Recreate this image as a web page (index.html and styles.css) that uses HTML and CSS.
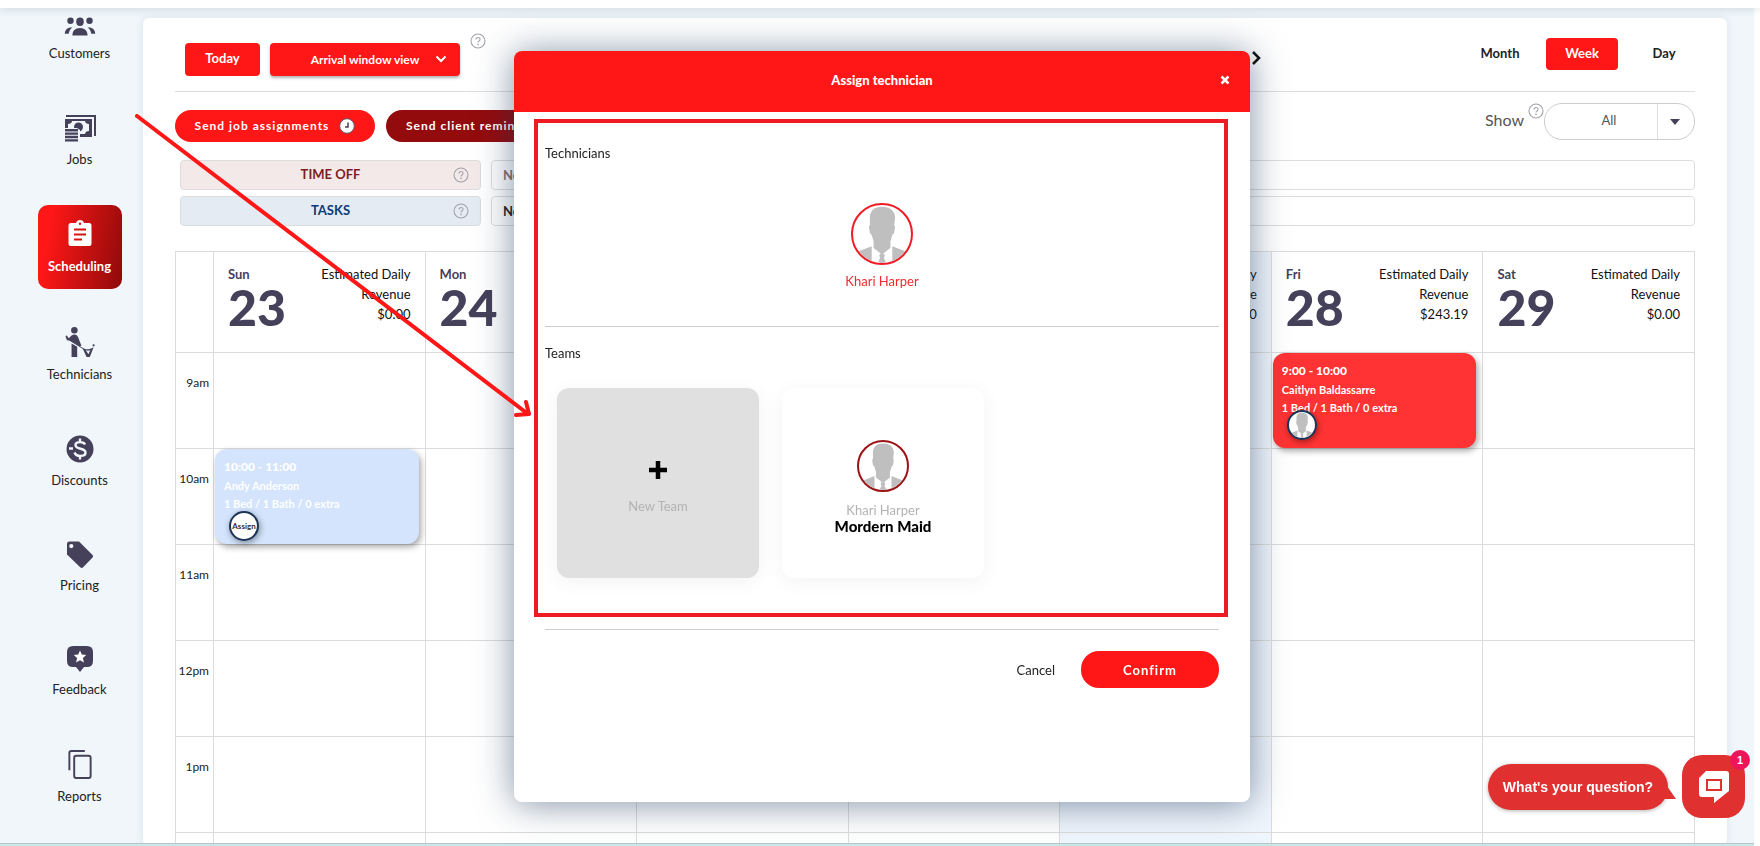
FILE: index.html
```html
<!DOCTYPE html>
<html lang="en">
<head>
    <meta charset="UTF-8">
    <meta name="viewport" content="width=device-width, initial-scale=1.0">
    <title>Scheduling</title>
    <link rel="stylesheet" href="styles.css">
</head>
<body>

    <!-- shared icons -->
    <svg class="defs" width="0" height="0">
        <symbol id="person" viewBox="0 0 62 62">
            <path fill="#bfbfbf" d="M18 14C18 6 23 2 31 2s14 4 14 12l-1 8 1 1-1 7-2 2-2 7v7l-9 7-9-7v-7l-2-7-2-2-1-7 1-1z"/>
            <path fill="#bfbfbf" d="M2 51l18-7v18H2zM60 51l-18-7v18h18zM29 52h4l1 2-1 3 2 3-2 2h-4l-2-2 2-3-1-3z"/>
        </symbol>
        <symbol id="help" viewBox="0 0 16 16">
            <circle cx="8" cy="8" r="7" fill="none" stroke="#a3a3ab" stroke-width="1.1"/>
            <path d="M6 6.5C6 3.8 10 3.8 10 6.4 10 8 8 7.9 8 9.5" fill="none" stroke="#a3a3ab" stroke-width="1.1"/>
            <circle cx="8" cy="11.4" r=".8" fill="#a3a3ab"/>
        </symbol>
    </svg>

    <header class="topbar"></header>

    <div class="page">
        <nav class="sidebar">
            <a href="#" class="nav-item">
                <svg width="32" height="19" viewBox="0 1 32 20"><circle cx="6" cy="5" r="3.4"/><ellipse cx="16" cy="6" rx="4" ry="4.4"/><circle cx="26" cy="5" r="3.4"/><path d="M8 20.500c0-5 3-8 8-8s8 3 8 8zM0 18.500c0-4 3-7 8-6.500-2 1.500-3 3-4 6.500zM32 18.500c0-4-3-7-8-6.500 2 1.500 3 3 4 6.500z"/></svg>
                <span>Customers</span>
            </a>
            <a href="#" class="nav-item">
                <svg width="32" height="28" viewBox="0 0 32 28"><path d="M2 1h30v21h-2V3H2zM1 5h27v18H1z"/><path fill="#f0f6fa" d="M8 7h13c0 2 2 3 4 3v7c-2 0-4 1-4 3H8c0-2-2-3-4-3v-7c2 0 4-1 4-3z"/><circle cx="14.500" cy="13" r="4.500"/><path fill="#f0f6fa" d="M0 14h13l3 2v12H0z"/><path d="M1 15h13v2.400H1zM1 18.400h13v2.400H1zM1 21.800h13v2.400H1zM1 25.200h13v2.400H1z"/></svg>
                <span>Jobs</span>
            </a>
            <a href="#" class="nav-item active">
                <svg width="24" height="26" viewBox="0 0 24 26"><path fill="#fff" fill-rule="evenodd" d="M3 3h5c1-4 7-4 8 0h5q2.500 0 2.500 2.500v18Q23.500 26 21 26H3Q.5 26 .5 23.500v-18Q.5 3 3 3zm9-.500a1.200 1.200 0 100 2.400 1.200 1.200 0 000-2.400zM6 8.500v2h12v-2zm0 5v2h12v-2zm0 5v2h8v-2z"/></svg>
                <span>Scheduling</span>
            </a>
            <a href="#" class="nav-item">
                <svg width="32" height="30" viewBox="0 0 32 32"><circle cx="10" cy="3.500" r="3.500"/><path d="M.500 9.500l1.500-.500 2 3 3-3c3-2 6-1 7 2l3.500 9-2 .500L5 14.500l-3-.500z"/><path d="M7 17.500l6 3.500v11H7z"/><path d="M4 13.500L20 23.500" stroke="#46415a"/><path d="M18.500 22c5 3 7 2 12-.500L26.500 32H23z"/><path d="M22 24.500c2 1 3 1 5 0L25 29z" fill="#f0f6fa"/><circle cx="30.500" cy="19.500" r="1.200"/></svg>
                <span>Technicians</span>
            </a>
            <a href="#" class="nav-item">
                <svg width="28" height="28" viewBox="0 0 28 28"><circle cx="14" cy="14" r="13.500"/><path d="M19 9.500c-1-3-9.500-3.500-9.500.500 0 5 10 2.500 10 7.500 0 4.500-9.500 4.500-11 0M14 3.500v4M14 20.500v4M3 13.500h4" fill="none" stroke="#f0f6fa" stroke-width="2.400"/></svg>
                <span>Discounts</span>
            </a>
            <a href="#" class="nav-item">
                <svg width="28" height="27" viewBox="0 0 28 28"><path fill-rule="evenodd" d="M3 .500h10L27 14.500q1 1.500 0 2.500L17 27.500q-1 1-2.500 0L.500 14V3Q.500.500 3 .500zM5 3a2.200 2.200 0 100 4.400A2.200 2.200 0 005 3z"/></svg>
                <span>Pricing</span>
            </a>
            <a href="#" class="nav-item">
                <svg width="28" height="26" viewBox="0 0 28 26"><path d="M7 0h14q6 0 6 6v9q0 6-6 6h-3l-4 5-4-5H7q-6 0-6-6V6q0-6 6-6z"/><path fill="#fff" d="M14 4.500l1.800 4 4.400.500-3.300 3 1 4.400-3.900-2.200-3.900 2.200 1-4.400-3.300-3 4.400-.500z"/></svg>
                <span>Feedback</span>
            </a>
            <a href="#" class="nav-item">
                <svg width="24" height="29" viewBox="0 0 24 30"><path fill="none" stroke="#46415a" stroke-width="2" d="M1 21V3q0-2 2-2h14M8 6h13q2 0 2 2v19q0 2-2 2H8q-2 0-2-2V8q0-2 2-2z"/></svg>
                <span>Reports</span>
            </a>
        </nav>

        <main class="panel">
            <div class="toolbar">
                <div class="toolbar-left">
                    <button type="button" class="btn">Today</button>
                    <div class="view-select">
                        <select aria-label="Calendar view"><option>Arrival window view</option></select>
                        <svg width="12" height="8" viewBox="0 0 12 8"><path d="M1.500 1.500L6 6l4.500-4.500" fill="none" stroke="#fff" stroke-width="2"/></svg>
                    </div>
                    <svg class="help-top" width="16" height="16"><use href="#help"/></svg>
                </div>
                <button type="button" class="next" aria-label="Next week">
                    <svg width="10" height="14" viewBox="0 0 10 14"><path d="M2 1l6 6-6 6" fill="none" stroke="#111" stroke-width="2.500"/></svg>
                </button>
                <div class="ranges">
                    <button type="button" class="range">Month</button>
                    <button type="button" class="range selected">Week</button>
                    <button type="button" class="range">Day</button>
                </div>
            </div>

            <div class="actions">
                <button type="button" class="pill">Send job assignments
                    <svg width="16" height="16" viewBox="0 0 16 16"><circle cx="8" cy="8" r="7.300" fill="#fff" stroke="#5a5566"/><path d="M9 4.500V9H6" fill="none" stroke="#46415a" stroke-width="1.500"/></svg>
                </button>
                <button type="button" class="pill dark">Send client reminders</button>
                <div class="show">
                    <label for="show">Show</label>
                    <svg class="help-show" width="16" height="16"><use href="#help"/></svg>
                    <div class="show-select">
                        <select id="show"><option>All</option></select>
                        <span class="caret"></span>
                    </div>
                </div>
            </div>

            <div class="notes">
                <div class="note-title off"><span>TIME OFF</span><svg width="16" height="16"><use href="#help"/></svg></div>
                <div class="note off">No time off</div>
                <div class="note-title tasks"><span>TASKS</span><svg width="16" height="16"><use href="#help"/></svg></div>
                <div class="note tasks">No tasks</div>
            </div>

            <table class="calendar">
                <thead>
                    <tr>
                        <th class="hour"></th>
                        <th><div class="day"><div>Sun<b>23</b></div><p>Estimated Daily Revenue<br>$0.00</p></div></th>
                        <th><div class="day"><div>Mon<b>24</b></div><p>Estimated Daily Revenue<br>$0.00</p></div></th>
                        <th><div class="day"><div>Tue<b>25</b></div><p>Estimated Daily Revenue<br>$0.00</p></div></th>
                        <th><div class="day"><div>Wed<b>26</b></div><p>Estimated Daily Revenue<br>$0.00</p></div></th>
                        <th class="today"><div class="day"><div>Thu<b>27</b></div><p>Estimated Daily Revenue<br>$0.00</p></div></th>
                        <th><div class="day"><div>Fri<b>28</b></div><p>Estimated Daily Revenue<br>$243.19</p></div></th>
                        <th><div class="day"><div>Sat<b>29</b></div><p>Estimated Daily Revenue<br>$0.00</p></div></th>
                    </tr>
                </thead>
                <tbody>
                    <tr><td class="hour">9am</td><td></td><td></td><td></td><td></td><td class="today"></td>
                        <td>
                            <div class="event booked">
                                <strong>9:00 - 10:00</strong>
                                <span>Caitlyn Baldassarre</span>
                                <span>1 Bed / 1 Bath / 0 extra</span>
                                <div class="assignee"><svg width="26" height="26"><use href="#person"/></svg></div>
                            </div>
                        </td><td></td></tr>
                    <tr><td class="hour">10am</td>
                        <td>
                            <div class="event open">
                                <strong>10:00 - 11:00</strong>
                                <span>Andy Anderson</span>
                                <span>1 Bed / 1 Bath / 0 extra</span>
                                <button type="button" class="assignee">Assign</button>
                            </div>
                        </td><td></td><td></td><td></td><td class="today"></td><td></td><td></td></tr>
                    <tr><td class="hour">11am</td><td></td><td></td><td></td><td></td><td class="today"></td><td></td><td></td></tr>
                    <tr><td class="hour">12pm</td><td></td><td></td><td></td><td></td><td class="today"></td><td></td><td></td></tr>
                    <tr><td class="hour">1pm</td><td></td><td></td><td></td><td></td><td class="today"></td><td></td><td></td></tr>
                    <tr><td class="hour"></td><td></td><td></td><td></td><td></td><td class="today"></td><td></td><td></td></tr>
                </tbody>
            </table>
        </main>
    </div>

    <div class="overlay">
        <div class="modal" role="dialog" aria-labelledby="modal-title">
            <div class="modal-header">
                <h2 id="modal-title">Assign technician</h2>
                <button type="button" class="close" aria-label="Close"><svg width="10" height="10" viewBox="0 0 10 10"><path d="M1.500 1.500l7 7M8.500 1.500l-7 7" stroke="#fff" stroke-width="2.500"/></svg></button>
            </div>
            <div class="choices">
                <h3>Technicians</h3>
                <button type="button" class="tech">
                    <span class="avatar"><svg><use href="#person"/></svg></span>
                    Khari Harper
                </button>
                <hr>
                <h3>Teams</h3>
                <div class="teams">
                    <button type="button" class="team new">
                        <svg width="20" height="20" viewBox="0 0 20 20"><path d="M10 1v18M1 10h18" stroke="#000" stroke-width="4.500"/></svg>
                        <span>New Team</span>
                    </button>
                    <button type="button" class="team">
                        <span class="avatar small"><svg><use href="#person"/></svg></span>
                        <span>Khari Harper</span>
                        <strong>Mordern Maid</strong>
                    </button>
                </div>
            </div>
            <div class="modal-footer">
                <button type="button" class="cancel">Cancel</button>
                <button type="button" class="confirm">Confirm</button>
            </div>
        </div>
    </div>

    <!-- pointer from the menu to the dialog -->
    <svg class="arrow" width="400" height="310" viewBox="0 0 400 310"><path d="M2 2l391 298M391 288l3 12-13 1" fill="none" stroke="#ff1717" stroke-width="4" stroke-linecap="round" stroke-linejoin="round"/></svg>

    <div class="chat">
        <div class="chat-text">What's your question?</div>
        <button type="button" class="chat-button" aria-label="Open chat">
            <svg width="32" height="34" viewBox="0 0 32 34"><path fill="#fff" fill-rule="evenodd" d="M8 1h20q3 0 3 3v17L16 33v-6H4q-3 0-3-3V8zM8 9v12h16V9zm2 2h12v8H10z"/></svg>
            <span class="badge">1</span>
        </button>
    </div>

    <footer class="bottom-bar"></footer>

</body>
</html>
```
FILE: styles.css
```css
* {
    box-sizing: border-box;
}
body {
    font-family: Lato, sans-serif;
    font-size: 13px;
    line-height: 20px;
    color: #222;
    margin: 0;
    height: 100vh;
    overflow: hidden;
    background-color: #fff;
}
button, select {
    font: inherit;
    color: inherit;
    border: 0;
    background: none;
    padding: 0;
    cursor: pointer;
}
svg {
    display: block;
    flex: none;
}
.defs {
    position: absolute;
}
.topbar {
    position: fixed;
    top: 0;
    left: 0;
    right: 0;
    height: 8px;
    background-color: #fff;
    box-shadow: 0 1px 8px rgba(60, 100, 110, 0.2);
    z-index: 1;
}
.bottom-bar {
    position: fixed;
    bottom: 0;
    left: 0;
    right: 6px;
    height: 3px;
    border-top: 1px solid #b5c6ca;
    background-color: #cbe8e9;
}
.page {
    display: grid;
    grid-template-columns: 143px 1fr;
    height: 100vh;
    margin-right: 6px;
    background-color: #f0f6fa;
}

/* Sidebar */
.sidebar {
    display: flex;
    flex-direction: column;
    align-items: center;
    gap: 23px;
    padding: 2px 0 0 16px;
}
.nav-item {
    display: flex;
    flex-direction: column;
    align-items: center;
    gap: 7px;
    width: 84px;
    padding: 15px 0 13px;
    border-radius: 10px;
    color: #222;
    fill: #46415a;
    text-decoration: none;
}
.nav-item.active {
    gap: 10px;
    background: linear-gradient(100deg, #ff1717 15%, #8f0a0a);
    color: #fff;
    font-weight: bold;
}

/* Calendar panel */
.panel {
    margin: 18px 27px 0 0;
    padding: 0 32px;
    background-color: #fff;
    border-radius: 6px;
    box-shadow: 0 0 8px rgba(40, 80, 100, 0.1);
    overflow: hidden;
}
.toolbar {
    display: flex;
    height: 74px;
    padding: 20px 10px 0;
    border-bottom: 1px solid #ddd;
}
.toolbar-left {
    display: flex;
    gap: 10px;
}
.btn {
    width: 75px;
    height: 33px;
    margin-top: 5px;
    padding-bottom: 3px;
    border-radius: 4px;
    background-color: #ff1717;
    color: #fff;
    font-weight: bold;
}
.view-select {
    position: relative;
    width: 190px;
    height: 33px;
    margin-top: 5px;
    border-radius: 4px;
    background-color: #ff1717;
    box-shadow: 0 2px 3px rgba(0, 0, 0, 0.3);
}
.view-select select {
    appearance: none;
    width: 100%;
    height: 100%;
    color: #fff;
    font-size: 12px;
    font-weight: bold;
    text-align-last: center;
}
.view-select svg {
    position: absolute;
    right: 13px;
    top: 12px;
    pointer-events: none;
}
.help-top {
    margin-top: -5px;
}
.next {
    align-self: flex-start;
    margin: 13px 203px 0 auto;
}
.ranges {
    display: flex;
    align-items: flex-start;
    gap: 10px;
    margin-right: -15px;
}
.range {
    width: 72px;
    height: 32px;
    padding-bottom: 3px;
    border-radius: 4px;
    font-weight: bold;
}
.range.selected {
    background-color: #ff1717;
    color: #fff;
}
.actions {
    display: flex;
    align-items: flex-start;
    gap: 11px;
    padding-top: 11px;
}
.pill {
    display: flex;
    align-items: center;
    justify-content: center;
    gap: 10px;
    width: 200px;
    height: 32px;
    margin-top: 7px;
    border-radius: 16px;
    background-color: #ff1717;
    color: #fff;
    font-size: 12px;
    font-weight: bold;
    letter-spacing: 1px;
}
.pill.dark {
    justify-content: flex-start;
    padding-left: 20px;
    background-color: #930b0d;
}
.show {
    display: flex;
    align-items: flex-start;
    margin-left: auto;
    color: #555;
    font-size: 16px;
}
.show label {
    margin: 7px 4px 0 0;
}
.show-select {
    display: flex;
    align-items: center;
    position: relative;
    width: 151px;
    height: 37px;
    border: 1px solid #ccc;
    border-radius: 18px;
}
.show-select select {
    appearance: none;
    width: 113px;
    height: 100%;
    padding: 0 0 3px 16px;
    border-right: 1px solid #ddd;
    font-size: 13px;
    text-align-last: center;
}
.caret {
    margin-left: 12px;
    border: 5px solid transparent;
    border-top: 6px solid #46415a;
    border-bottom: 0;
    pointer-events: none;
}
.notes {
    display: grid;
    grid-template-columns: 301px 1fr;
    gap: 6px 10px;
    margin-top: 18px;
    padding-left: 5px;
}
.note-title, .note {
    display: flex;
    align-items: center;
    height: 30px;
    padding: 0 11px;
    border: 1px solid #ddd;
    border-radius: 4px;
    font-weight: bold;
}
.note-title span {
    flex: 1;
    padding: 0 0 3px 16px;
    text-align: center;
}
.note-title.off {
    background-color: #f3e9e9;
    color: #7a1f1f;
}
.note-title.tasks {
    background-color: #e4ebf3;
    color: #0d3b73;
}
.note.off {
    color: #8a6f6f;
}
.calendar {
    width: 100%;
    margin-top: 25px;
    border-collapse: collapse;
    table-layout: fixed;
}
.calendar th, .calendar td {
    border: 1px solid #dcdcdc;
    padding: 0;
    vertical-align: top;
}
.calendar th {
    height: 101px;
    text-align: left;
}
.calendar td {
    height: 96px;
}
.calendar .hour {
    width: 38px;
}
.calendar td.hour {
    padding: 20px 4px 0 0;
    text-align: right;
    font-size: 12px;
}
.today {
    background-color: #f0f6fd;
}
.day {
    display: flex;
    justify-content: space-between;
    padding: 12px 14px;
    color: #46415a;
}
.day b {
    display: block;
    font-size: 50px;
    font-weight: 900;
    line-height: 46px;
}
.day p {
    width: 90px;
    margin: 0;
    color: #111;
    font-weight: normal;
    text-align: right;
}
.event {
    display: flex;
    flex-direction: column;
    position: relative;
    height: 95px;
    margin: 0 6px 0 1px;
    padding: 8px 9px;
    border-radius: 12px;
    box-shadow: 2px 3px 6px rgba(0, 0, 0, 0.35);
    color: #fff;
    font-size: 11px;
    font-weight: bold;
    line-height: 18px;
}
.event strong {
    font-size: 12px;
    font-weight: 900;
    line-height: 20px;
}
.event.booked {
    background-color: #f33;
}
.event.open {
    background-color: #d3e4fc;
}
.assignee {
    position: absolute;
    left: 14px;
    bottom: 3px;
    width: 30px;
    height: 30px;
    border: 2px solid #1d3557;
    border-radius: 50%;
    background-color: #fff;
    box-shadow: 1px 2px 6px rgba(0, 0, 0, 0.4);
    color: #333;
    font-size: 8px;
    overflow: hidden;
}
.booked .assignee {
    bottom: 8px;
}

/* Assign dialog */
.overlay {
    position: fixed;
    inset: 0;
    display: flex;
    justify-content: center;
    align-items: flex-start;
    padding: 51px 0 0 4px;
    z-index: 2;
}
.modal {
    width: 736px;
    min-height: 751px;
    background-color: #fff;
    border-radius: 8px;
    box-shadow: 0 2px 36px rgba(30, 55, 90, 0.55);
}
.modal-header {
    position: relative;
    height: 61px;
    border-radius: 8px 8px 0 0;
    background-color: #ff1717;
    color: #fff;
}
.modal-header h2 {
    margin: 0;
    padding-top: 19px;
    font-size: 13px;
    font-weight: 900;
    text-align: center;
}
.close {
    position: absolute;
    right: 20px;
    top: 24px;
}
.choices {
    margin: 7px 22px 0 20px;
    padding: 20px 5px 35px 7px;
    border: 4px solid #ed1c24;
}
.choices h3 {
    margin: 0;
    font-size: 13px;
    font-weight: normal;
}
.choices hr, .modal-footer {
    border: 0;
    border-top: 1px solid #ccc;
}
.choices hr {
    margin: 35px 0 16px;
}
.tech {
    display: flex;
    flex-direction: column;
    align-items: center;
    gap: 6px;
    margin: 40px auto 0;
    color: #f12b2f;
}
.avatar {
    width: 62px;
    height: 62px;
    border: 2px solid #ee1c24;
    border-radius: 50%;
    background-color: #fff;
    overflow: hidden;
}
.avatar svg {
    width: 100%;
    height: 100%;
}
.avatar.small {
    width: 52px;
    height: 52px;
    margin-bottom: 10px;
    border-color: #9c1316;
}
.teams {
    display: flex;
    gap: 23px;
    padding: 25px 12px 0;
}
.team {
    display: flex;
    flex-direction: column;
    align-items: center;
    justify-content: center;
    width: 202px;
    height: 190px;
    padding-top: 7px;
    border-radius: 12px;
    box-shadow: 0 4px 20px rgba(0, 0, 0, 0.05);
    color: #b3b3b3;
    line-height: 16px;
}
.team strong {
    color: #000;
    font-size: 15px;
    font-weight: 900;
}
.team.new {
    gap: 18px;
    background-color: #e0e0e0;
}
.modal-footer {
    display: flex;
    justify-content: flex-end;
    align-items: center;
    gap: 26px;
    margin: 12px 31px 0;
    padding-top: 21px;
}
.confirm {
    width: 138px;
    height: 37px;
    border-radius: 18px;
    background-color: #ff1717;
    color: #fff;
    font-weight: bold;
    letter-spacing: 1px;
}

.arrow {
    position: fixed;
    left: 135px;
    top: 114px;
    z-index: 3;
}

/* Chat */
.chat {
    display: flex;
    align-items: center;
    gap: 14px;
    position: fixed;
    right: 15px;
    bottom: 28px;
    z-index: 3;
    font-family: "Liberation Sans", Arial, sans-serif;
    font-weight: bold;
    color: #fff;
}
.chat-text {
    position: relative;
    width: 180px;
    height: 46px;
    border-radius: 23px;
    background-color: #e03030;
    box-shadow: 0 1px 4px rgba(0, 0, 0, 0.3);
    font-size: 14px;
    line-height: 46px;
    text-align: center;
}
.chat-text::after {
    content: "";
    position: absolute;
    right: -8px;
    bottom: 11px;
    border-left: 14px solid #e03030;
    border-top: 20px solid transparent;
}
.chat-button {
    display: flex;
    align-items: center;
    justify-content: center;
    position: relative;
    width: 63px;
    height: 63px;
    border-radius: 20px;
    background-color: #e03030;
}
.badge {
    position: absolute;
    right: -5px;
    top: -5px;
    width: 20px;
    height: 20px;
    border-radius: 50%;
    background-color: #f0145a;
    font-size: 11px;
    line-height: 20px;
}
```
